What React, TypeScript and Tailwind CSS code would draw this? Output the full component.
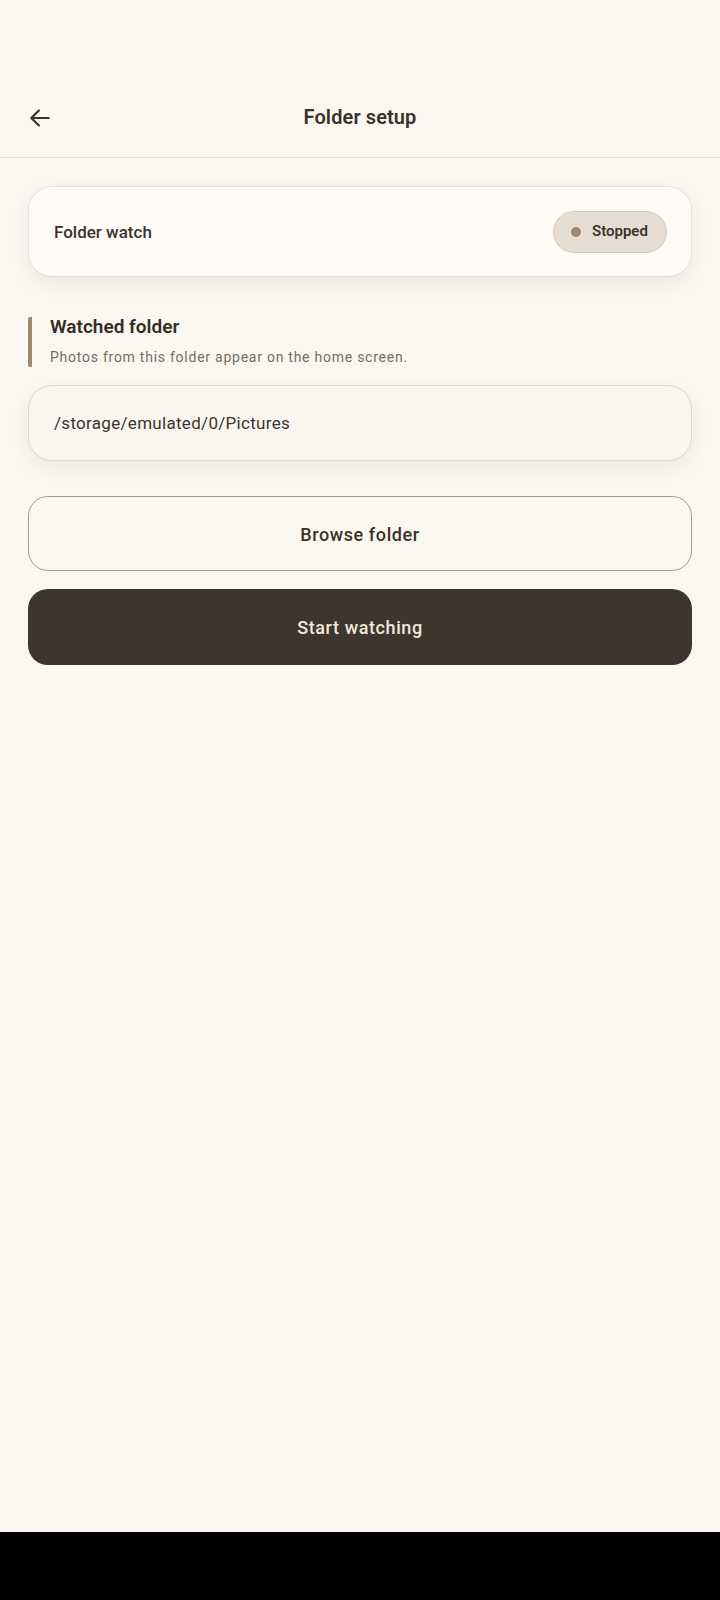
import React from "react";

export default function App() {
  return (
    <div
      className="h-[1600px] w-[720px] flex flex-col bg-[#faf7f0] text-[#3a312a]"
      style={{ fontFamily: "Roboto, 'Noto Sans', sans-serif" }}
    >
      <div className="flex-1 flex flex-col">
        <div className="h-[78px]" />
        <header className="relative h-[80px] flex items-center justify-center border-b border-[#e4ded5]">
          <button className="absolute left-[23px] top-1/2 -translate-y-1/2 p-1 text-[#3a312a]">
            <svg width="26" height="26" viewBox="0 0 24 24" fill="none" stroke="currentColor" strokeWidth="2" strokeLinecap="round" strokeLinejoin="round">
              <path d="M20 12H4.5" />
              <path d="M11 5l-7 7 7 7" />
            </svg>
          </button>
          <h1 className="text-[20px] font-semibold tracking-[0.1px] -mt-[2px]">Folder setup</h1>
        </header>

        <main className="px-7 pt-[28px] flex flex-col">
          <div className="h-[91px] rounded-[24px] border border-[#e6dfd5] bg-[#fffcf7] shadow-[0_6px_18px_rgba(70,55,40,0.07)] flex items-center justify-between pl-[25px] pr-[24px]">
            <span className="text-[17px] font-medium pt-[3px]">Folder watch</span>
            <div className="h-[42px] w-[114px] rounded-full border border-[#d5cabc] bg-[#e6ddd2] flex items-center pl-[17px] gap-[11px]">
              <span className="w-[10px] h-[10px] rounded-full bg-[#9b896f]" />
              <span className="text-[15px] font-semibold text-[#3d342c]">Stopped</span>
            </div>
          </div>

          <section className="mt-10 flex border-l-4 border-[#9c8a70] rounded-[2px] pl-[18px] h-[50px] flex-col justify-center">
            <h2 className="text-[19px] font-semibold leading-[22px] text-[#352c25] -mt-[2px]">Watched folder</h2>
            <p className="mt-[10px] text-[14px] leading-[18px] text-[#776d64] tracking-[0.75px]">
              Photos from this folder appear on the home screen.
            </p>
          </section>

          <div className="mt-[18px] h-[76px] rounded-[24px] border border-[#e0d8cd] bg-[#faf6ef] shadow-[0_6px_18px_rgba(70,55,40,0.07)] flex items-center pl-[25px]">
            <span className="text-[17px] tracking-[0.3px] text-[#3d342c] pt-[1px]">/storage/emulated/0/Pictures</span>
          </div>

          <button className="mt-[35px] h-[75px] rounded-[20px] border-[1.5px] border-[#a39b90] bg-transparent flex items-center justify-center">
            <span className="text-[18px] font-medium tracking-[0.6px] text-[#3a312a] pt-[1px]">Browse folder</span>
          </button>

          <button className="mt-[18px] h-[76px] rounded-[20px] bg-[#3e352c] flex items-center justify-center">
            <span className="text-[18px] font-medium tracking-[0.6px] text-[#f1e8dc]">Start watching</span>
          </button>
        </main>
      </div>
      <div className="h-[68px] bg-black" />
    </div>
  );
}
